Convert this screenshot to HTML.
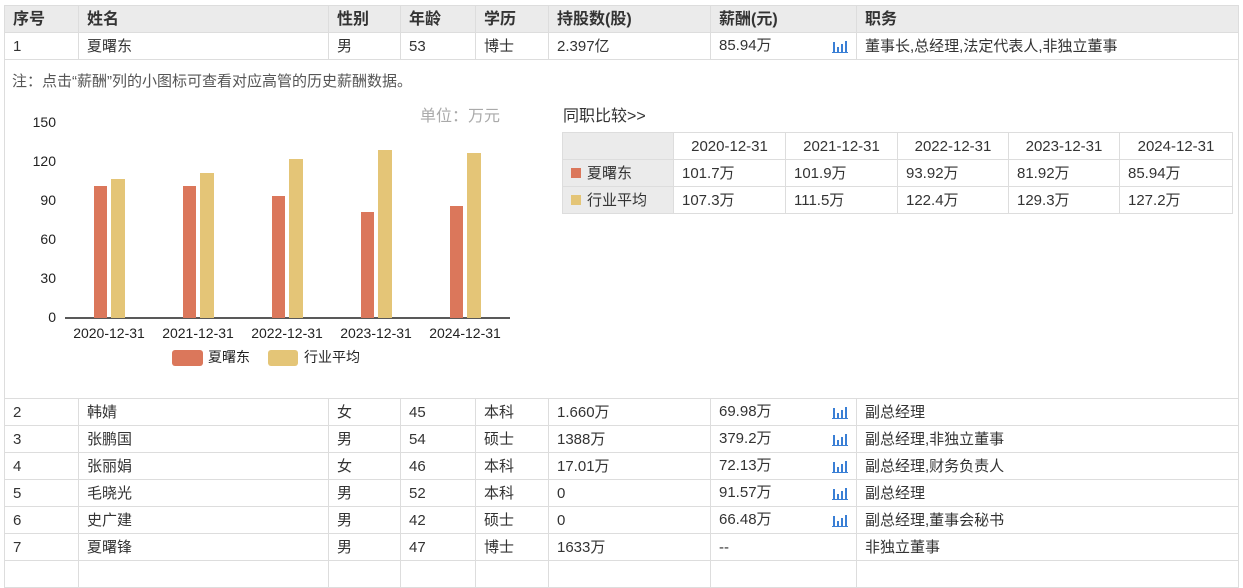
<!DOCTYPE html>
<html><head><meta charset="utf-8"><style>
body{margin:0;width:1243px;height:570px;overflow:hidden;background:#fff;font-family:"Liberation Sans","Noto Sans CJK SC",sans-serif;color:#333;font-size:15px;}
.a{position:absolute;white-space:nowrap}
table{border-collapse:collapse;position:absolute;}
td{border:1px solid #ddd;padding:2px 0 0 8px;height:24px;line-height:20px;vertical-align:middle;white-space:nowrap;overflow:hidden}
.h td{background:#ebebeb;font-weight:bold;font-size:16px}
.ic{display:inline-block;float:right;margin:3px 8px 0 0}
</style></head><body>
<table style="left:4px;top:5px;width:1234px;table-layout:fixed">
<colgroup><col style="width:74px"><col style="width:250px"><col style="width:72px"><col style="width:75px"><col style="width:73px"><col style="width:162px"><col style="width:146px"><col style="width:382px"></colgroup>
<tr class="h"><td>序号</td><td>姓名</td><td>性别</td><td>年龄</td><td>学历</td><td>持股数(股)</td><td>薪酬(元)</td><td>职务</td></tr>
<tr><td>1</td><td>夏曙东</td><td>男</td><td>53</td><td>博士</td><td>2.397亿</td><td>85.94万<span class="ic"><svg width="16" height="14"><g fill="#3a7fd5"><rect x="1" y="3" width="2" height="11"/><rect x="5" y="8" width="2" height="6"/><rect x="9" y="5" width="2" height="9"/><rect x="13" y="2" width="2" height="12"/><rect x="0" y="13" width="16" height="1"/></g></svg></span></td><td>董事长,总经理,法定代表人,非独立董事</td></tr>
<tr><td colspan="8" style="height:338px;vertical-align:top;padding:0"></td></tr>
<tr><td>2</td><td>韩婧</td><td>女</td><td>45</td><td>本科</td><td>1.660万</td><td>69.98万<span class="ic">#</span></td><td>副总经理</td></tr>
<tr><td>3</td><td>张鹏国</td><td>男</td><td>54</td><td>硕士</td><td>1388万</td><td>379.2万<span class="ic">#</span></td><td>副总经理,非独立董事</td></tr>
<tr><td>4</td><td>张丽娟</td><td>女</td><td>46</td><td>本科</td><td>17.01万</td><td>72.13万<span class="ic">#</span></td><td>副总经理,财务负责人</td></tr>
<tr><td>5</td><td>毛晓光</td><td>男</td><td>52</td><td>本科</td><td>0</td><td>91.57万<span class="ic">#</span></td><td>副总经理</td></tr>
<tr><td>6</td><td>史广建</td><td>男</td><td>42</td><td>硕士</td><td>0</td><td>66.48万<span class="ic">#</span></td><td>副总经理,董事会秘书</td></tr>
<tr><td>7</td><td>夏曙锋</td><td>男</td><td>47</td><td>博士</td><td>1633万</td><td>--</td><td>非独立董事</td></tr>
<tr><td></td><td></td><td></td><td></td><td></td><td></td><td></td><td></td></tr>
</table>
<script>
document.querySelectorAll('.ic').forEach(function(e){if(e.textContent=='#')e.innerHTML=document.querySelector('.ic').innerHTML;});
</script>
<div class="a" style="left:12px;top:70px;color:#555">注：点击“薪酬”列的小图标可查看对应高管的历史薪酬数据。</div>
<div class="a" style="left:420px;top:102px;color:#aaa;font-size:16px">单位：万元</div>
<div class="a" style="left:563px;top:102px;font-size:16px">同职比较&gt;&gt;</div>
<svg class="a" style="left:0;top:100px" width="540" height="280">
<g font-size="14" fill="#222" text-anchor="end">
<text x="56" y="27">150</text><text x="56" y="66">120</text><text x="56" y="105">90</text><text x="56" y="144">60</text><text x="56" y="183">30</text><text x="56" y="222">0</text></g>
<line x1="65" y1="218" x2="510" y2="218" stroke="#222" stroke-width="1.5"/>
<g fill="#db775b">
<rect x="94" y="86" width="13" height="132"/><rect x="183" y="86" width="13" height="132"/><rect x="272" y="96" width="13" height="122"/><rect x="361" y="112" width="13" height="106"/><rect x="450" y="106" width="13" height="112"/></g>
<g fill="#e4c577">
<rect x="111" y="79" width="14" height="139"/><rect x="200" y="73" width="14" height="145"/><rect x="289" y="59" width="14" height="159"/><rect x="378" y="50" width="14" height="168"/><rect x="467" y="53" width="14" height="165"/></g>
<g font-size="14" fill="#222" text-anchor="middle">
<text x="109" y="238">2020-12-31</text><text x="198" y="238">2021-12-31</text><text x="287" y="238">2022-12-31</text><text x="376" y="238">2023-12-31</text><text x="465" y="238">2024-12-31</text></g>
<rect x="172" y="250" width="31" height="16" rx="3" fill="#db775b"/><text x="208" y="262" font-size="14" fill="#222">夏曙东</text>
<rect x="268" y="250" width="30" height="16" rx="3" fill="#e4c577"/><text x="304" y="262" font-size="14" fill="#222">行业平均</text>
</svg>
<table style="left:562px;top:132px;width:670px;table-layout:fixed">
<colgroup><col style="width:111px"><col style="width:112px"><col style="width:112px"><col style="width:111px"><col style="width:111px"><col style="width:113px"></colgroup>
<tr><td style="background:#ebebeb"></td><td style="text-align:center;padding:2px 0 0 0">2020-12-31</td><td style="text-align:center;padding:2px 0 0 0">2021-12-31</td><td style="text-align:center;padding:2px 0 0 0">2022-12-31</td><td style="text-align:center;padding:2px 0 0 0">2023-12-31</td><td style="text-align:center;padding:2px 0 0 0">2024-12-31</td></tr>
<tr><td style="background:#ebebeb"><span style="display:inline-block;width:10px;height:10px;background:#db775b;margin-right:6px"></span>夏曙东</td><td>101.7万</td><td>101.9万</td><td>93.92万</td><td>81.92万</td><td>85.94万</td></tr>
<tr><td style="background:#ebebeb"><span style="display:inline-block;width:10px;height:10px;background:#e4c577;margin-right:6px"></span>行业平均</td><td>107.3万</td><td>111.5万</td><td>122.4万</td><td>129.3万</td><td>127.2万</td></tr>
</table>
</body></html>
